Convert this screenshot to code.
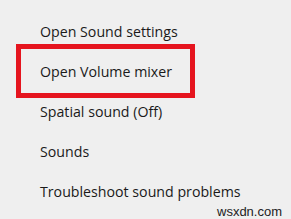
const items = [
  'Open Sound settings',
  'Open Volume mixer',
  'Spatial sound (Off)',
  'Sounds',
  'Troubleshoot sound problems',
];

export default function App() {
  return (
    <div className="relative w-[291px] h-[219px] overflow-hidden bg-[#efefef]">
      <ul
        className="pt-[18px] pl-[40px] text-[14.2px] text-[#1a1a1a]"
        style={{ fontFamily: '"Segoe UI", "Open Sans", "Noto Sans", sans-serif' }}
      >
        {items.map((label) => (
          <li key={label} className="h-[40px] leading-[28px]">
            {label}
          </li>
        ))}
      </ul>

      {/* highlight annotation */}
      <div className="absolute left-[16px] top-[44px] w-[179px] h-[54px] border-[5px] border-[#e5141e]" />

      <span
        className="absolute left-[217px] top-[202px] text-[13px] text-[#222]"
        style={{ fontFamily: '"Liberation Sans", Arial, sans-serif' }}
      >
        wsxdn.com
      </span>
    </div>
  );
}
